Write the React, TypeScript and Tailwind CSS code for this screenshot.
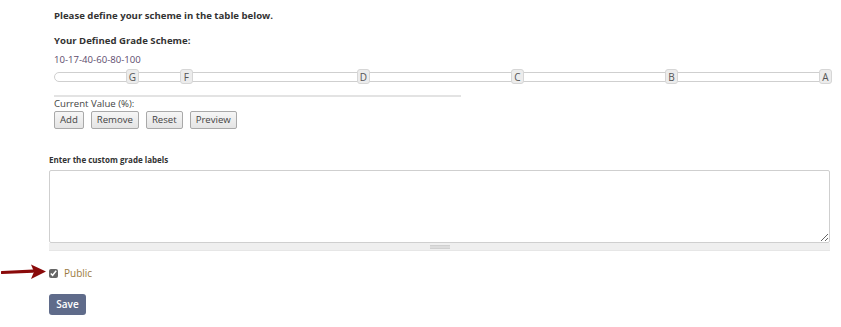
const HANDLES: Array<{ label: string; value: number }> = [
  { label: 'G', value: 10 },
  { label: 'F', value: 17 },
  { label: 'D', value: 40 },
  { label: 'C', value: 60 },
  { label: 'B', value: 80 },
  { label: 'A', value: 100 },
]

const BUTTONS = ['Add', 'Remove', 'Reset', 'Preview']

function GradeSlider() {
  return (
    <div className="relative h-[10px] w-[778px] rounded-l-[5px] border border-[#cfcfcf] bg-white">
      {HANDLES.map((h) => (
        <span
          key={h.label}
          className="absolute top-[-4px] flex h-[15px] w-[13px] items-center justify-center rounded-[3px] border border-[#d6d6d6] bg-[#ececec] text-[10px] leading-none text-[#555]"
          style={{ left: 1.5 + h.value * 7.7 - 7.5 }}
        >
          {h.label}
        </span>
      ))}
    </div>
  )
}

function Arrow() {
  return (
    <svg width="46" height="18" viewBox="0 0 46 18" className="absolute left-[1px] top-[-4px]">
      <path d="M1 9.5 L32 8.2" stroke="#8a0a0a" strokeWidth="3.2" strokeLinecap="round" fill="none" />
      <path d="M30 1.5 L45 8.5 L30 16 L33 8.8 Z" fill="#8a0a0a" />
    </svg>
  )
}

export default function App() {
  return (
    <div className="h-[327px] w-[841px] bg-white font-['Open_Sans',sans-serif] text-[#333]">
      <div className="flex flex-col pl-[54px] pt-[9px]">
        <p className="text-[9.6px] font-bold leading-[14px] text-[#333]">Please define your scheme in the table below.</p>
        <p className="mt-[11px] text-[9.6px] font-bold leading-[14px] text-[#333]">Your Defined Grade Scheme:</p>
        <p className="mt-[5px] text-[9.6px] leading-[13px] text-[#5c4a6c]">10-17-40-60-80-100</p>
        <div className="mt-[6px]">
          <GradeSlider />
        </div>
        <div className="mt-[13px] h-[2px] w-[407px] bg-[#e3e3e3]" />
        <p className="mt-[0px] text-[9.6px] leading-[13px] text-[#444]">Current Value (%):</p>
        <div className="mt-[1px] flex gap-[7px]">
          {BUTTONS.map((b) => (
            <button
              key={b}
              type="button"
              className="h-[18px] rounded-[2px] border border-[#a9a9a9] bg-[linear-gradient(#f6f6f6,#e4e4e4)] px-[5px] text-[9.6px] leading-none text-[#444]"
            >
              {b}
            </button>
          ))}
        </div>
      </div>

      <div className="flex flex-col pl-[49px] pr-[11px] pt-[25px]">
        <p className="text-[8px] font-bold leading-[11px] text-[#333]">Enter the custom grade labels</p>
        <div className="mt-[5px] flex flex-col">
          <textarea className="h-[73px] w-full resize rounded-[2px] border border-[#cfcfcf] bg-white outline-none" />
          <div className="flex h-[8px] items-center justify-center border-b border-[#e6e6e6] bg-[#efefef]">
            <span className="h-[4px] w-[20px] border-y border-[#d0d0d0] bg-[#dcdcdc]" />
          </div>
        </div>

        <div className="relative mt-[16px] flex items-center gap-[6px]">
          <div className="absolute left-[-49px] top-0">
            <Arrow />
          </div>
          <input type="checkbox" defaultChecked className="m-0 h-[9px] w-[9px] accent-[#666]" />
          <span className="text-[10px] leading-[13px] text-[#9a7a40]">Public</span>
        </div>

        <div className="mt-[10px]">
          <button
            type="button"
            className="h-[21px] w-[37px] rounded-[3px] bg-[#5f6b8a] text-[10px] font-semibold text-white"
          >
            Save
          </button>
        </div>
      </div>
    </div>
  )
}
